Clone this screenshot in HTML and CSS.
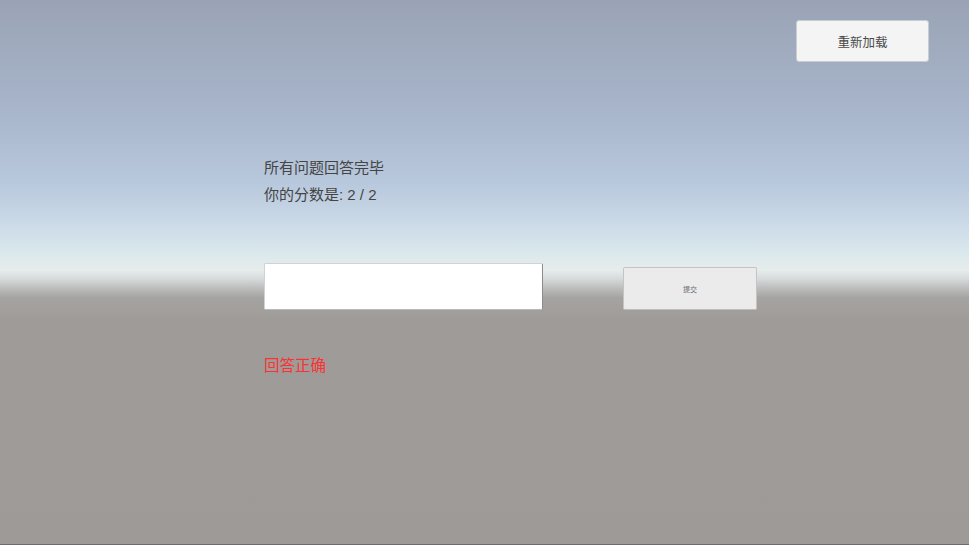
FILE: index.html
```html
<!DOCTYPE html>
<html lang="zh">
<head>
<meta charset="utf-8">
<title>问答</title>
<link rel="stylesheet" href="styles.css">
</head>
<body>
<div class="page">
  <div class="topbar">
    <button class="btn reload">重新加载</button>
  </div>
  <div class="main">
    <div class="info">
      <p class="line">所有问题回答完毕</p>
      <p class="line">你的分数是: 2 / 2</p>
    </div>
    <div class="answer-row">
      <input class="answer" type="text">
      <button class="btn submit">提交</button>
    </div>
    <p class="result">回答正确</p>
  </div>
</div>
</body>
</html>
```
FILE: styles.css
```css
html, body {
  margin: 0;
  padding: 0;
}
body {
  width: 969px;
  height: 545px;
  overflow: hidden;
  font-family: "Liberation Sans", "Noto Sans CJK SC", sans-serif;
}
.page {
  box-sizing: border-box;
  height: 545px;
  padding-top: 20px;
  border-bottom: 1px solid #6e6b69;
  background: linear-gradient(to bottom,
    #9aa3b5 0px,
    #a6b3c8 100px,
    #b7c7dc 180px,
    #cddce8 228px,
    #dce9ec 255px,
    #e6ecec 270px,
    #d6dada 279px,
    #bcbebd 288px,
    #a5a3a1 298px,
    #9f9b99 320px,
    #9e9a98 545px);
}
.topbar {
  display: flex;
  justify-content: flex-end;
  padding-right: 40px;
}
.btn {
  font-family: "Liberation Sans", "Noto Sans CJK SC", sans-serif;
  box-sizing: border-box;
  width: 133px;
  height: 42px;
  border-radius: 3px;
  cursor: pointer;
  padding: 0;
}
.reload {
  background: #f4f4f4;
  border: 1px solid #c9ccd2;
  color: #4a4a4a;
  font-size: 12.5px;
}
.main {
  padding-left: 264px;
  padding-top: 92px;
}
.info .line {
  margin: 0;
  font-size: 15px;
  line-height: 27px;
  color: #444444;
}
.answer-row {
  display: flex;
  align-items: flex-end;
  gap: 80px;
  margin-top: 55px;
}
.answer {
  box-sizing: border-box;
  width: 279px;
  height: 47px;
  background: #ffffff;
  border: 1px solid #cfd3d6;
  border-right-color: #8b8b8b;
  border-bottom-color: #b9b9b9;
  border-radius: 2px;
  margin: 0;
  outline: none;
}
.submit {
  width: 134px;
  height: 43px;
  background: #ebebeb;
  border: 1px solid #c4c4c4;
  border-bottom-color: #bcbcbc;
  color: #6a6a6a;
  font-size: 7px;
  border-radius: 2px;
}
.result {
  margin: 46px 0 0;
  font-size: 15.5px;
  line-height: 20px;
  color: #fb3232;
}
```
